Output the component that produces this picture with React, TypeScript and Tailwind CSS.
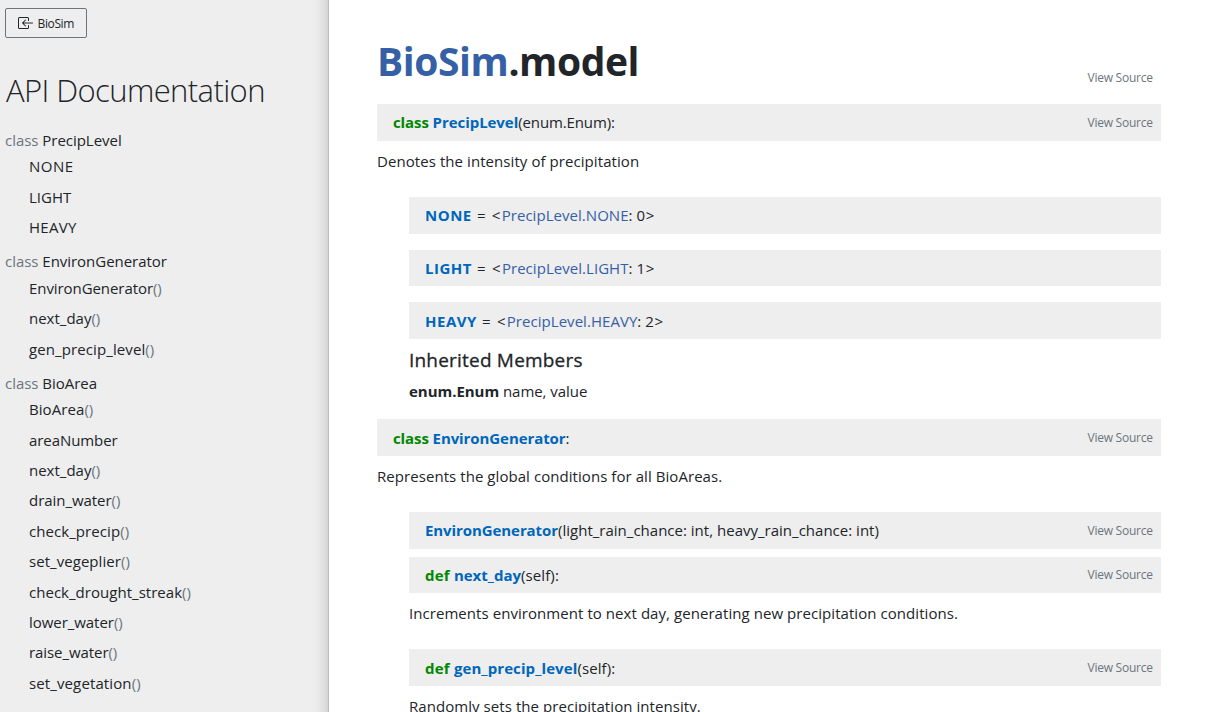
import type { ReactNode } from "react";
import { BsBoxArrowInLeft } from "react-icons/bs";

type Member = { name: string; call?: boolean; spacing?: string };
type Group = { name: string; members: Member[] };

const groups: Group[] = [
  {
    name: "PrecipLevel",
    members: [
      { name: "NONE", spacing: "tracking-[0.5px]" },
      { name: "LIGHT" },
      { name: "HEAVY", spacing: "tracking-[0.3px]" },
    ],
  },
  {
    name: "EnvironGenerator",
    members: [
      { name: "EnvironGenerator", call: true, spacing: "tracking-[-0.07px]" },
      { name: "next_day", call: true },
      { name: "gen_precip_level", call: true, spacing: "tracking-[0.1px]" },
    ],
  },
  {
    name: "BioArea",
    members: [
      { name: "BioArea", call: true, spacing: "tracking-[0.07px]" },
      { name: "areaNumber", spacing: "tracking-[-0.07px]" },
      { name: "next_day", call: true },
      { name: "drain_water", call: true, spacing: "tracking-[-0.05px]" },
      { name: "check_precip", call: true, spacing: "tracking-[0.07px]" },
      { name: "set_vegeplier", call: true, spacing: "tracking-[0.05px]" },
      { name: "check_drought_streak", call: true, spacing: "tracking-[0.03px]" },
      { name: "lower_water", call: true, spacing: "tracking-[-0.05px]" },
      { name: "raise_water", call: true, spacing: "tracking-[-0.07px]" },
      { name: "set_vegetation", call: true, spacing: "tracking-[0.12px]" },
    ],
  },
];

function Sidebar() {
  return (
    <nav className="h-full w-[329px] shrink-0 overflow-hidden border-r border-[#bdbdbd] bg-[#eeeeee] pl-[5px] pt-2 shadow-[inset_-16px_0_16px_-16px_rgba(0,0,0,0.22)]">
      <a className="flex h-[30px] w-[82px] items-center gap-1 rounded-[2px] border border-[#6c757d] pl-[11.5px] text-[12px] tracking-[-0.37px]">
        <BsBoxArrowInLeft size={16} />
        <span className="pt-px">BioSim</span>
      </a>
      <h2 className="mt-[33px] pl-px text-[31px] font-light leading-[38px] tracking-[-0.6px]">
        API Documentation
      </h2>
      <ul className="mt-[18.8px]">
        {groups.map((group) => (
          <li key={group.name} className="mb-[6.7px]">
            <div className="h-[23.6px] leading-[24.2px] tracking-[-0.03px]">
              <span className="text-[#6c757d]">class </span>
              {group.name}
            </div>
            <ul className="pl-6">
              {group.members.map((member) => (
                <li key={member.name} className={`h-[30.4px] leading-[30.4px] ${member.spacing ?? ""}`}>
                  {member.name}
                  {member.call && <span className="text-[#6c757d]">()</span>}
                </li>
              ))}
            </ul>
          </li>
        ))}
      </ul>
    </nav>
  );
}

function ViewSource() {
  return <span className="ml-auto text-[12px] tracking-[-0.26px] text-[#6c757d]">View Source</span>;
}

function Bar({
  className,
  textClass = "",
  source,
  children,
}: {
  className: string;
  textClass?: string;
  source?: boolean;
  children: ReactNode;
}) {
  return (
    <div className={`flex shrink-0 items-center whitespace-pre bg-[#eeeeee] pl-4 pr-[8.4px] ${className}`}>
      <span className={textClass}>{children}</span>
      {source && <ViewSource />}
    </div>
  );
}

function Keyword({ className = "tracking-[-0.1px]", children }: { className?: string; children: ReactNode }) {
  return <span className={`font-bold text-[#008800] ${className}`}>{children} </span>;
}

function Name({ className = "", children }: { className?: string; children: ReactNode }) {
  return <span className={`font-bold text-[#0066bb] ${className}`}>{children}</span>;
}

function EnumValue({ name, value }: { name: string; value: number }) {
  return (
    <>
      <Name className="tracking-[0.5px]">{name}</Name>
      <span className="tracking-[1.25px]">{" = <"}</span>
      <span className="tracking-[0.04px]">
        <span className="text-[#3660a5]">PrecipLevel.{name}</span>
        {`: ${value}`}
      </span>
      <span className="pl-[0.6px]">{">"}</span>
    </>
  );
}

export default function App() {
  return (
    <div className="flex h-[712px] w-[1210px] overflow-hidden bg-white font-['Open_Sans','Noto_Sans',sans-serif] text-[15px] leading-6 text-[#212529]">
      <Sidebar />
      <main className="flex h-full w-[832px] flex-col overflow-hidden pl-12">
        <div className="mt-[37px] flex h-12 shrink-0 items-end pr-[8.4px]">
          <h1 className="text-[39px] font-bold leading-[48px] tracking-[-0.42px]">
            <span className="text-[#3660a5]">BioSim</span>.model
          </h1>
          <div className="ml-auto flex translate-y-[5px]">
            <ViewSource />
          </div>
        </div>

        <Bar className="mt-[19px] h-[37px]" textClass="pb-px" source>
          <Keyword>class</Keyword>
          <Name className="tracking-[-0.05px]">PrecipLevel</Name>
          <span className="tracking-[-0.12px]">(enum.Enum):</span>
        </Bar>
        <p className="mt-2 shrink-0 tracking-[0.07px]">Denotes the intensity of precipitation</p>

        <section className="mt-6 flex shrink-0 flex-col pl-8">
          <Bar className="h-[37px]" textClass="pb-px">
            <EnumValue name="NONE" value={0} />
          </Bar>
          <Bar className="mt-4 h-9">
            <EnumValue name="LIGHT" value={1} />
          </Bar>
          <Bar className="mt-4 h-[37px]">
            <EnumValue name="HEAVY" value={2} />
          </Bar>
          <h5 className="mt-[9px] text-[19px] font-medium leading-6 tracking-[0.2px] [-webkit-text-stroke:0.3px_#212529]">
            Inherited Members
          </h5>
          <p className="mt-[7px] tracking-[-0.04px]">
            <b className="font-bold">enum.Enum</b> name, value
          </p>
        </section>

        <Bar className="mt-4 h-[37px]" source>
          <Keyword>class</Keyword>
          <Name className="tracking-[-0.08px]">EnvironGenerator</Name>:
        </Bar>
        <p className="mt-2 shrink-0 tracking-[0.06px]">Represents the global conditions for all BioAreas.</p>

        <section className="mt-6 flex shrink-0 flex-col pl-8">
          <Bar className="h-[37px]" textClass="pb-px" source>
            <Name className="tracking-[-0.08px]">EnvironGenerator</Name>
            <span className="tracking-[0.01px]">(light_rain_chance: int, heavy_rain_chance: int)</span>
          </Bar>
          <Bar className="mt-2 h-9" source>
            <Keyword className="tracking-[0.2px]">def</Keyword>
            <Name>next_day</Name>
            <span className="tracking-[0.1px]">(self):</span>
          </Bar>
          <p className="mt-2 tracking-[0.06px]">
            Increments environment to next day, generating new precipitation conditions.
          </p>
          <Bar className="mt-6 h-[37px]" source>
            <Keyword className="tracking-[0.2px]">def</Keyword>
            <Name className="tracking-[0.1px]">gen_precip_level</Name>
            <span className="tracking-[0.1px]">(self):</span>
          </Bar>
          <p className="mt-2 tracking-[0.06px]">Randomly sets the precipitation intensity.</p>
        </section>
      </main>
    </div>
  );
}
